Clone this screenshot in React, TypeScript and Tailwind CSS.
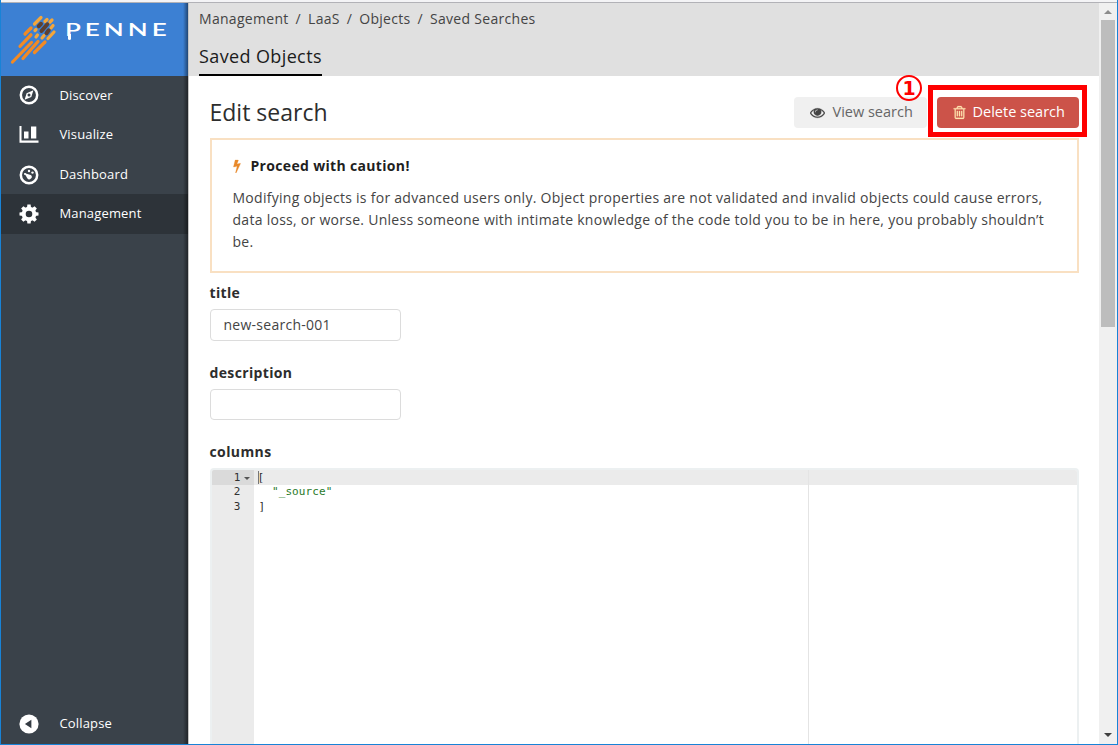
import React from "react";

const orange = "#f28a24";
const amber = "#f4a63a";
const brown = "#5e4030";

const strands: [number, number, number, number, string][] = [
  [12.5, 62, 31.5, 42.5, orange],
  [20, 46.3, 31, 34.8, orange],
  [25, 34, 31, 28, orange],
  [34.5, 24, 41, 17.5, amber],
  [23, 58.5, 38, 41.5, orange],
  [34.5, 52.5, 45, 42, orange],
  [45, 21.5, 47, 19.5, amber],
  [50, 22, 52, 20, amber],
  [35, 30.5, 36, 29.5, amber],
  [51, 28, 53, 25.5, amber],
  [36, 37, 37.5, 35, amber],
  [42, 38, 44, 35.5, amber],
  [48, 38.5, 54, 32, amber],
  [38.8, 26.2, 41, 23.8, brown],
  [41.5, 31, 47.3, 24.3, brown],
  [46.5, 33.2, 48.7, 30.3, brown],
];

function Mark() {
  return (
    <svg className="block h-[72px] w-[60px] shrink-0" viewBox="1 3 60 72" aria-hidden="true">
      {strands.map(([x1, y1, x2, y2, c], i) => (
        <line key={i} x1={x1} y1={y1} x2={x2} y2={y2} stroke={c} strokeWidth={c === brown ? 4 : 3.2} strokeLinecap="round" />
      ))}
    </svg>
  );
}

function Compass() {
  return (
    <svg viewBox="0 0 20 20" className="size-5">
      <circle cx="10" cy="10" r="8.2" fill="none" stroke="white" strokeWidth="2.5" />
      <path fillRule="evenodd" fill="white" d="M14.4 5.2 12.3 11.9 5.6 14.8 7.6 8.2ZM10 8.5a1.5 1.5 0 1 0 0 3 1.5 1.5 0 0 0 0-3Z" />
    </svg>
  );
}

function Bars() {
  return (
    <svg viewBox="0 0 20 20" className="size-5" fill="white">
      <path d="M.5 1H2.5V15.6H19.5V17.8H.5ZM5 6.5H9.5V13.5H5ZM12 1.5H17.3V13.5H12Z" />
    </svg>
  );
}

function Gauge() {
  return (
    <svg viewBox="0 0 20 20" className="size-5" fill="white">
      <circle cx="10" cy="10" r="8.2" fill="none" stroke="white" strokeWidth="2.5" />
      <path d="M5.2 8.1 11.7 9.9A2.4 2.4 0 1 1 8.3 13.2Z" />
      <circle cx="10" cy="6" r="1.2" />
      <circle cx="13.5" cy="7.6" r="1.2" />
      <circle cx="6" cy="9" r="1" />
    </svg>
  );
}

const teeth = [0, 45, 90, 135, 180, 225, 270, 315];

function Gear() {
  return (
    <svg viewBox="0 0 20 20" className="size-5">
      <circle cx="10" cy="10" r="5.3" fill="none" stroke="white" strokeWidth="4" />
      {teeth.map((a) => (
        <path key={a} fill="white" d="M7.9 4 8.4.5H11.6L12.1 4Z" transform={`rotate(${a} 10 10)`} />
      ))}
    </svg>
  );
}

function Back() {
  return (
    <svg viewBox="0 0 20 20" className="size-5">
      <circle cx="10" cy="10" r="9.6" fill="white" />
      <path d="M12.4 5.8V14.2L5.9 10Z" fill="#343b43" />
    </svg>
  );
}

function Glyph({ d, className }: { d: string; className: string }) {
  return (
    <svg viewBox="0 0 1792 1792" className={className} fill="currentColor" stroke="currentColor" strokeWidth="30">
      <path d={d} />
    </svg>
  );
}

const eye =
  "M1664 960q-152-236-381-353 61 104 61 225 0 185-131.5 316.5t-316.5 131.5-316.5-131.5-131.5-316.5q0-121 61-225-229 117-381 353 133 205 333.5 326.5t434.5 121.5 434.5-121.5 333.5-326.5zm-720-384q0-20-14-34t-34-14q-125 0-214.5 89.5t-89.5 214.5q0 20 14 34t34 14 34-14 14-34q0-86 61-147t147-61q20 0 34-14t14-34zm848 384q0 34-20 69-140 230-376.5 368.5t-499.5 138.5-499.5-139-376.5-368q-20-35-20-69t20-69q140-229 376.5-368t499.5-139 499.5 139 376.5 368q20 35 20 69z";
const trash =
  "M704 736v576q0 14-9 23t-23 9h-64q-14 0-23-9t-9-23v-576q0-14 9-23t23-9h64q14 0 23 9t9 23zm256 0v576q0 14-9 23t-23 9h-64q-14 0-23-9t-9-23v-576q0-14 9-23t23-9h64q14 0 23 9t9 23zm256 0v576q0 14-9 23t-23 9h-64q-14 0-23-9t-9-23v-576q0-14 9-23t23-9h64q14 0 23 9t9 23zm128 724v-948h-896v948q0 22 7 40.5t14.5 27 10.5 8.5h832q3 0 10.5-8.5t14.5-27 7-40.5zm-672-1076h448l-48-117q-7-9-17-11h-317q-10 2-17 11zm928 32v64q0 14-9 23t-23 9h-96v948q0 83-47 143.5t-113 60.5h-832q-66 0-113-58.5t-47-141.5v-952h-96q-14 0-23-9t-9-23v-64q0-14 9-23t23-9h309l70-167q15-37 54-63t79-26h320q40 0 79 26t54 63l70 167h309q14 0 23 9t9 23z";
const bolt =
  "M1333 566q18 20 7 44l-540 1157q-13 25-42 25-4 0-14-2-17-5-25.5-19t-4.5-30l197-808-406 101q-4 1-12 1-18 0-31-11-18-15-13-39l201-825q4-16 17-26t31-10h328q19 0 32 12.5t13 29.5q0 8-5 18l-171 463 396-98q8-2 12-2 19 0 34 15z";

function NavItem({ icon, label, active = false }: { icon: React.ReactNode; label: string; active?: boolean }) {
  return (
    <a className={`flex h-[39.6px] items-center pl-[18px] text-[13px] tracking-[0.17px] text-white ${active ? "bg-[#2d3339]" : ""}`}>
      {icon}
      <span className="ml-[20.4px]">{label}</span>
    </a>
  );
}

function Sidebar() {
  return (
    <nav className="relative flex w-[187px] shrink-0 flex-col bg-[#3a424a]">
      <div className="flex h-[72.6px] bg-[#3c80d3]">
        <Mark />
        <div className="relative">
          <span className="mt-[14px] ml-[4px] block w-[72px] origin-left scale-x-[1.53] font-['Lato'] text-[17px] leading-[26px] font-semibold tracking-[2.6px] text-white">
            PENNE
          </span>
          <div className="absolute top-[31px] left-[6.5px] h-[6px] w-[3px] rounded-b-sm bg-white" />
        </div>
      </div>
      <NavItem icon={<Compass />} label="Discover" />
      <NavItem icon={<Bars />} label="Visualize" />
      <NavItem icon={<Gauge />} label="Dashboard" />
      <NavItem icon={<Gear />} label="Management" active />
      <div className="mt-auto">
        <NavItem icon={<Back />} label="Collapse" />
      </div>
      <div className="absolute inset-y-0 right-0 w-[5px] bg-linear-to-r from-transparent to-black/45" />
    </nav>
  );
}

function Header() {
  return (
    <header className="flex h-[73px] flex-col justify-between bg-[#e0e0e0] pl-[10px]">
      <div className="flex pt-[5px] text-[14px] leading-[22px] tracking-[0.3px] text-[#444]">
        <span>Management</span>
        <span className="mx-[7px]">/</span>
        <span>LaaS</span>
        <span className="mx-[7px]">/</span>
        <span>Objects</span>
        <span className="mx-[7px]">/</span>
        <span>Saved Searches</span>
      </div>
      <div className="self-start border-b-2 border-black pb-[5px] text-[18px] leading-[26px] tracking-[0.38px] text-[#1b1b1b]">
        Saved Objects
      </div>
    </header>
  );
}

function Field({ label, value }: { label: string; value: string }) {
  return (
    <div className="mb-[21px]">
      <div className="h-[27px] text-[14px] leading-[22px] font-bold tracking-[0.35px]">{label}</div>
      <div className="flex h-[31.5px] w-[191px] items-center rounded border border-[#dcdcdc] pl-[13px] text-[14px] tracking-[0.26px] text-[#444]">
        {value}
      </div>
    </div>
  );
}

function Editor() {
  return (
    <div className="relative flex min-h-0 flex-1 overflow-hidden rounded-t border-x-2 border-t-2 border-[#ecf0f1] bg-white font-['DejaVu_Sans_Mono'] text-[11px] leading-[14.8px] tracking-[0.1px]">
      <div className="w-[42px] shrink-0 bg-[#ebebeb] text-[#333]">
        <div className="relative bg-[#dadada] pt-px pr-[13px] text-right">
          1
          <span className="absolute top-[7px] right-[4px] border-x-[3px] border-t-[3px] border-x-transparent border-t-[#555]" />
        </div>
        <div className="pr-[13px] text-right">2</div>
        <div className="pr-[13px] text-right">3</div>
      </div>
      <div className="w-[555px] shrink-0 border-r border-[#e4e4e4] whitespace-pre">
        <div className="bg-[#ebebeb] pt-px pl-[4px]">
          <span className="border-l border-[#777] tracking-normal"><span className="-ml-px">[</span></span>
        </div>
        <div className="pl-[5px] text-[#2a7a2a]">{'  "_source"'}</div>
        <div className="pl-[5px]">]</div>
      </div>
      <div className="flex-1">
        <div className="h-[15.8px] bg-[#ebebeb]" />
      </div>
    </div>
  );
}

function Scrollbar() {
  return (
    <div className="flex w-[18px] shrink-0 flex-col items-center bg-[#f0f0f0]">
      <div className="flex h-[17px] items-center">
        <div className="border-x-[4px] border-b-[4px] border-x-transparent border-b-[#8b8b8b]" />
      </div>
      <div className="h-[307px] w-[14px] bg-[#bdbdbd]" />
      <div className="mt-auto flex h-[18px] items-center">
        <div className="border-x-[4px] border-t-[4px] border-x-transparent border-t-[#404040]" />
      </div>
    </div>
  );
}

export default function App() {
  return (
    <div className="relative flex h-[745px] w-[1118px] flex-col overflow-hidden border-x border-b border-[#1883d7] bg-white font-['Open_Sans',sans-serif] text-[#2d2d2d]">
      <div className="h-[3px] shrink-0 border-b border-[#b2b2b7] bg-[#f4f4f6]" />
      <div className="flex min-h-0 flex-1">
        <Sidebar />
        <div className="flex min-w-0 flex-1 flex-col border-l border-[#c4c4c4]">
          <Header />
          <main className="flex min-h-0 flex-1 flex-col pr-[20.5px] pl-[20.5px]">
            <div className="mt-[20px] flex h-[33px] items-center justify-between">
              <h1 className="text-[23px] leading-[33px]">Edit search</h1>
              <div className="flex gap-[10px] text-[14.5px]">
                <button className="flex h-[31px] w-[133px] items-center rounded bg-[#f0f0f0] pl-[16px] text-[#666]">
                  <Glyph d={eye} className="mr-[8px] size-[15px] text-[#444]" />
                  <span className="-mt-px">View search</span>
                </button>
                <button className="flex h-[31px] w-[142px] items-center rounded bg-[#cc5349] pl-[15px] text-white">
                  <Glyph d={trash} className="mr-[6px] size-[15px] text-[#ffe3b0]" />
                  <span className="-mt-px">Delete search</span>
                </button>
              </div>
            </div>
            <section className="mt-[9px] h-[135px] border-2 border-[#f9e0c2] pt-[15px] pl-[21px] text-[14px] leading-[22px]">
              <div className="flex items-center font-bold tracking-[0.33px] text-[#1f1f1f]">
                <Glyph d={bolt} className="mr-[7px] -ml-[3px] size-[14px] text-[#e8892b]" />
                Proceed with caution!
              </div>
              <p className="mt-[10px] tracking-[0.275px] whitespace-nowrap text-[#444]">
                Modifying objects is for advanced users only. Object properties are not validated and invalid objects could cause errors,
                <br />
                data loss, or worse. Unless someone with intimate knowledge of the code told you to be in here, you probably shouldn’t
                <br />
                be.
              </p>
            </section>
            <div className="mt-[9px]">
              <Field label="title" value="new-search-001" />
              <Field label="description" value="" />
            </div>
            <div className="h-[26.5px] text-[14px] leading-[22px] font-bold tracking-[0.4px]">columns</div>
            <Editor />
          </main>
        </div>
        <Scrollbar />
      </div>
      <div className="absolute top-[85px] left-[927px] h-[52px] w-[159px] border-[5px] border-[#fe0000]" />
      <div className="absolute top-[75px] left-[895px] flex size-[26px] items-center justify-center rounded-full border-2 border-[#fe0000] font-['DejaVu_Sans'] text-[19px] leading-[20px] font-bold text-[#fe0000]">
        1
      </div>
    </div>
  );
}
